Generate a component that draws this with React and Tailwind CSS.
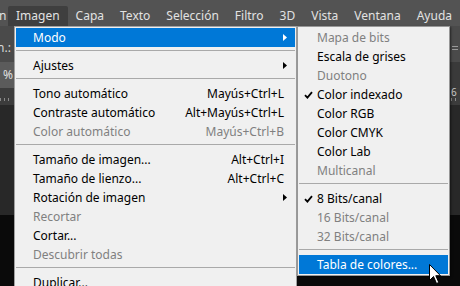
import React from "react";

const mainItems = [
  { t: "Modo", arrow: true, hl: true },
  "sep",
  { t: "Ajustes", arrow: true },
  "sep",
  { t: "Tono automático", s: "Mayús+Ctrl+L" },
  { t: "Contraste automático", s: "Alt+Mayús+Ctrl+L" },
  { t: "Color automático", s: "Mayús+Ctrl+B", dis: true },
  "sep",
  { t: "Tamaño de imagen...", s: "Alt+Ctrl+I" },
  { t: "Tamaño de lienzo...", s: "Alt+Ctrl+C" },
  { t: "Rotación de imagen", arrow: true },
  { t: "Recortar", dis: true },
  { t: "Cortar..." },
  { t: "Descubrir todas", dis: true },
  "sep",
  { t: "Duplicar..." },
];

const subItems = [
  { t: "Mapa de bits", dis: true },
  { t: "Escala de grises" },
  { t: "Duotono", dis: true },
  { t: "Color indexado", check: true },
  { t: "Color RGB" },
  { t: "Color CMYK" },
  { t: "Color Lab" },
  { t: "Multicanal", dis: true },
  "sep",
  { t: "8 Bits/canal", check: true },
  { t: "16 Bits/canal", dis: true },
  { t: "32 Bits/canal", dis: true },
  "sep",
  { t: "Tabla de colores...", hl: true },
];

function Arrow({ white }) {
  return (
    <svg width="4" height="7" viewBox="0 0 4 7" className="shrink-0">
      <polygon points="0,0 4,3.5 0,7" fill={white ? "#ffffff" : "#000000"} />
    </svg>
  );
}

function Check() {
  return (
    <svg width="9" height="8" viewBox="0 0 9 8">
      <path d="M1 4.2 L3.4 6.6 L8 1.2" stroke="#000" strokeWidth="1.8" fill="none" />
    </svg>
  );
}

function Sep() {
  return (
    <div className="h-[9px] pt-[3px]">
      <div className="h-px bg-[#a9a9a9]" />
    </div>
  );
}

function MainRow({ it }) {
  const color = it.hl ? "text-white bg-[#0078d7]" : it.dis ? "text-[#808080]" : "text-black";
  return (
    <div className={`h-[19px] flex items-center pl-[17px] pr-[2px] ${color}`}>
      <span className="flex-1 whitespace-nowrap">{it.t}</span>
      {it.s && <span className="whitespace-nowrap mr-[9px]">{it.s}</span>}
      {it.arrow && <span className="w-[10px] flex justify-start"><Arrow white={it.hl} /></span>}
      {!it.arrow && <span className="w-[0px]" />}
    </div>
  );
}

function SubRow({ it }) {
  const color = it.hl ? "text-white bg-[#0078d7]" : it.dis ? "text-[#808080]" : "text-black";
  return (
    <div className={`h-[19px] flex items-center ${color}`}>
      <span className="w-[18px] flex justify-center pl-[1px]">{it.check && <Check />}</span>
      <span className="whitespace-nowrap">{it.t}</span>
    </div>
  );
}

const menubar = ["Capa", "Texto", "Selección", "Filtro", "3D", "Vista", "Ventana", "Ayuda"];

export default function App() {
  return (
    <div className="relative w-[460px] h-[286px] overflow-hidden bg-black font-['Noto_Sans',sans-serif] text-[12px] leading-none">
      {/* background app */}
      <div className="flex flex-col h-full">
        <div className="h-[26px] bg-[#535353] flex items-end text-[#e2e2e2]">
          <div className="w-[13px] h-[20px] flex items-center overflow-hidden">
            <span className="ml-[-1px]">n</span>
          </div>
          <div className="h-[20px] px-[8px] flex items-center bg-[#3f3f3f] rounded-t-[2px]">Imagen</div>
          {menubar.map((m) => (
            <div key={m} className="h-[20px] px-[8px] flex items-center">{m}</div>
          ))}
        </div>
        <div className="h-[36px] bg-[#4a4a4a] flex items-center justify-between text-[#d8d8d8]">
          <span className="ml-[-3px] mt-[8px]">n.:</span>
          <div className="w-[11px] h-full flex flex-col justify-center gap-[2px] pt-[8px]">
            <div className="h-px w-[6px] ml-[3px] bg-[#9a9a9a]" />
            <div className="h-px w-[6px] ml-[3px] bg-[#9a9a9a]" />
          </div>
        </div>
        <div className="h-[26px] bg-[#3a3a3a] flex">
          <div className="w-[14px] bg-[#5b5b5b] text-[#e0e0e0] flex items-center justify-end pr-[1px]">%</div>
        </div>
        <div className="h-[17px] bg-[#3c3c3c] flex justify-between text-[#c8c8c8] text-[10px]">
          <div className="w-[14px] flex items-end gap-[3px] pb-[4px]">
            <div className="w-px h-[3px] bg-[#8a8a8a]" />
            <div className="w-px h-[3px] bg-[#8a8a8a]" />
            <div className="w-px h-[3px] bg-[#8a8a8a]" />
          </div>
          <div className="w-[11px] flex flex-col items-start">
            <span className="ml-[2px] mt-[-1px]">6</span>
            <div className="mt-auto mb-[4px] flex gap-[3px] ml-[2px]">
              <div className="w-px h-[3px] bg-[#8a8a8a]" />
              <div className="w-px h-[3px] bg-[#8a8a8a]" />
            </div>
          </div>
        </div>
        <div className="h-[110px] bg-[#282828]" />
        <div className="flex-1 bg-[#0a0a0a]" />
      </div>

      {/* main dropdown */}
      <div className="absolute left-[14px] top-[26px] w-[283px] h-[280px] bg-[#f0f0f0] border border-[#a0a0a0] p-[1px]">
        {mainItems.map((it, i) => (it === "sep" ? <Sep key={i} /> : <MainRow key={i} it={it} />))}
      </div>

      {/* submenu */}
      <div className="absolute left-[297px] top-[26px] w-[153px] h-[250px] bg-[#f0f0f0] border border-[#979797] p-[1px] shadow-[1px_1px_2px_rgba(0,0,0,0.5)]">
        {subItems.map((it, i) => (it === "sep" ? <Sep key={i} /> : <SubRow key={i} it={it} />))}
      </div>

      {/* cursor */}
      <svg className="absolute left-[429px] top-[264px]" width="13" height="21" viewBox="0 0 13 21">
        <polygon points="0.5,0.5 0.5,16.5 4.5,12.5 7.5,19.5 9.8,18.5 6.8,11.7 11.5,11.7" fill="#ffffff" stroke="#000000" strokeWidth="1" />
      </svg>
    </div>
  );
}
